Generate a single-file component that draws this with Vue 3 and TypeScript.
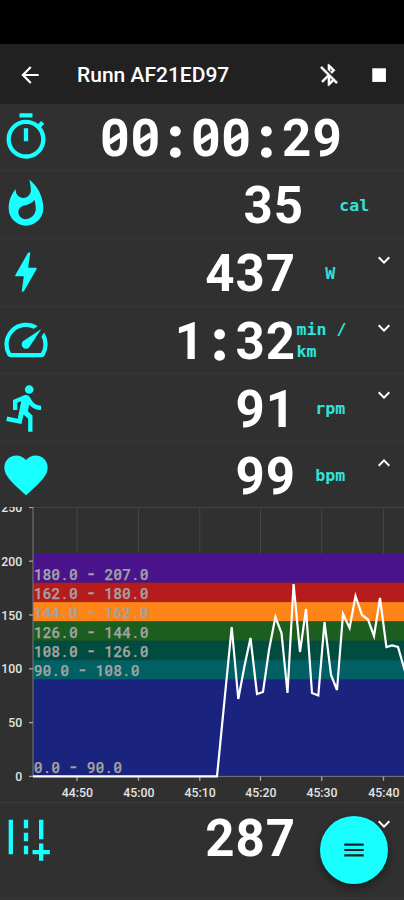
<script setup lang="ts">
interface Metric {
  name: string
  value: string
  unit?: string
  icon: string
  chevron?: 'up' | 'down'
  layout: 'timer' | 'plain' | 'expandable'
}

const icons = {
  timer:
    'M12,20A7,7 0 0,1 5,13A7,7 0 0,1 12,6A7,7 0 0,1 19,13A7,7 0 0,1 12,20M19.03,7.39L20.45,5.97C20,5.46 19.55,5 19.04,4.56L17.62,6C16.07,4.74 14.12,4 12,4A9,9 0 0,0 3,13A9,9 0 0,0 12,22C17,22 21,17.97 21,13C21,10.88 20.26,8.93 19.03,7.39M11,14H13V8H11M15,1H9V3H15V1Z',
  flame:
    'M13.5.67s.74 2.65.74 4.8c0 2.06-1.35 3.73-3.41 3.73-2.07 0-3.63-1.67-3.63-3.73l.03-.36C5.21 7.51 4 10.62 4 14c0 4.42 3.58 8 8 8s8-3.58 8-8C20 8.61 17.41 3.8 13.5.67zM11.71 19c-1.78 0-3.22-1.4-3.22-3.14 0-1.62 1.05-2.76 2.81-3.12 1.77-.36 3.6-1.21 4.62-2.58.39 1.29.59 2.65.59 4.04 0 2.65-2.15 4.8-4.8 4.8z',
  bolt: 'M11 21h-1l1-7H7.5c-.58 0-.57-.32-.38-.66.19-.34.05-.08.07-.12C8.48 10.94 10.42 7.54 13 3h1l-1 7h3.5c.49 0 .56.33.47.51l-.07.15C12.96 17.55 11 21 11 21z',
  speed:
    'M20.38 8.57l-1.23 1.85a8 8 0 0 1-.22 7.58H5.07A8 8 0 0 1 15.58 6.85l1.85-1.23A10 10 0 0 0 3.35 19a2 2 0 0 0 1.72 1h13.85a2 2 0 0 0 1.74-1 10 10 0 0 0-.27-10.44zm-9.79 6.84a2 2 0 0 0 2.83 0l5.66-8.49-8.49 5.66a2 2 0 0 0 0 2.83z',
  run: 'M13.49 5.48c1.1 0 2-.9 2-2s-.9-2-2-2-2 .9-2 2 .9 2 2 2zm-3.6 13.9l1-4.4 2.1 2v6h2v-7.5l-2.1-2 .6-3c1.3 1.5 3.3 2.5 5.5 2.5v-2c-1.9 0-3.5-1-4.3-2.4l-1-1.6c-.4-.6-1-1-1.7-1-.3 0-.5.1-.8.1l-5.2 2.2v4.7h2v-3.4l1.8-.7-1.6 8.1-4.9-1-.4 2 7 1.4z',
  heart:
    'M12 21.35l-1.45-1.32C5.4 15.36 2 12.28 2 8.5 2 5.42 4.42 3 7.5 3c1.74 0 3.41.81 4.5 2.09C13.09 3.81 14.76 3 16.5 3 19.58 3 22 5.42 22 8.5c0 3.78-3.4 6.86-8.55 11.54L12 21.35z',
  road: 'M20 18v-3h-2v3h-3v2h3v3h2v-3h3v-2zM20 4h-2v9h2zM6 4H4v16h2zM11 4h2v4h-2zM11 10h2v4h-2zM11 16h2v4h-2z',
}

const metrics: Metric[] = [
  { name: 'time', value: '00:00:29', icon: icons.timer, layout: 'timer' },
  { name: 'energy', value: '35', unit: 'cal', icon: icons.flame, layout: 'plain' },
  { name: 'power', value: '437', unit: 'W', icon: icons.bolt, chevron: 'down', layout: 'expandable' },
  { name: 'pace', value: '1:32', unit: 'min / km', icon: icons.speed, chevron: 'down', layout: 'expandable' },
  { name: 'cadence', value: '91', unit: 'rpm', icon: icons.run, chevron: 'down', layout: 'expandable' },
  { name: 'heart', value: '99', unit: 'bpm', icon: icons.heart, chevron: 'up', layout: 'expandable' },
]
const distance: Metric = {
  name: 'distance', value: '287', unit: '', icon: icons.road, chevron: 'down', layout: 'expandable',
}

const chevrons = {
  up: 'M12 8l-6 6 1.41 1.41L12 10.83l4.59 4.58L18 14z',
  down: 'M16.59 8.59L12 13.17 7.41 8.59 6 10l6 6 6-6z',
}

// Chart geometry, in the pixels of its own 404 x 295 canvas
const left = 33
const right = 404
const base = 269.4
const perUnit = 1.076
const y = (v: number): number => base - v * perUnit

const zones = [
  { from: 180, to: 207, color: '#4a148c' },
  { from: 162, to: 180, color: '#b71c1c' },
  { from: 144, to: 162, color: '#ff8418' },
  { from: 126, to: 144, color: '#1b5e20' },
  { from: 108, to: 126, color: '#004d40' },
  { from: 90, to: 108, color: '#006064' },
  { from: 0, to: 90, color: '#1a237e' },
]

const charWidth = 8.83
const zoneLabels = zones.map((z) => {
  const text = `${z.from.toFixed(1)} - ${z.to.toFixed(1)}`
  const chars = [...text].map((c, i) => ({ c, x: left + 5.1 + i * charWidth }))
  return { chars, y: y(z.from) - 3.2 }
})

const yTicks = [0, 50, 100, 150, 200, 250]
const xTicks = [
  { x: 77, label: '44:50' },
  { x: 138.5, label: '45:00' },
  { x: 199.8, label: '45:10' },
  { x: 260.5, label: '45:20' },
  { x: 321.7, label: '45:30' },
  { x: 383.5, label: '45:40' },
]

const samples: [number, number][] = [
  [33, 269.4], [217, 269.4], [231.7, 120], [238.3, 192], [244.5, 159], [250.5, 131], [257, 187],
  [263, 185], [269, 143], [275.4, 110], [281.5, 126], [287.5, 186], [293.6, 77], [300, 145],
  [306, 102], [312, 186], [318.3, 188.5], [324.5, 115], [331, 168], [337, 183], [343, 107],
  [349.6, 121], [355.5, 89], [362, 108], [368, 112.5], [374, 129], [380, 91], [386.4, 140],
  [392, 138.5], [398, 140], [406, 168],
]
const line = samples.map((p) => p.join(',')).join(' ')
</script>

<template>
  <div class="screen">
    <div class="status"></div>
    <header class="bar">
      <svg class="bar-icon" viewBox="0 0 24 24"><path d="M20 11H7.83l5.59-5.59L12 4l-8 8 8 8 1.41-1.41L7.83 13H20v-2z" /></svg>
      <h1>Runn AF21ED97</h1>
      <svg class="bar-icon bluetooth" viewBox="0 0 24 24"><path d="M13 5.83l1.88 1.88-1.6 1.6 1.41 1.41 3.02-3.02L12 2h-1v5.03l2 2v-3.2zM5.41 4L4 5.41 10.59 12 5 17.59 6.41 19 11 14.41V22h1l4.29-4.29 2.3 2.29L20 18.59 5.41 4zM13 18.17v-3.76l1.88 1.88L13 18.17z" /></svg>
      <svg class="bar-icon stop" viewBox="0 0 24 24"><path d="M5.8 5.8h12.6v12.6H5.8z" /></svg>
    </header>

    <section v-for="m in metrics" :key="m.name" class="row" :class="[m.layout, m.name]">
      <svg class="icon" viewBox="0 0 24 24"><path :d="m.icon" /></svg>
      <div class="value"><span v-for="(c, i) in m.value" :key="i" :class="{ zero: c === '0', colon: c === ':' }">{{ c }}</span></div>
      <div v-if="m.unit" class="unit">{{ m.unit }}</div>
      <svg v-if="m.chevron" class="chevron" viewBox="0 0 24 24"><path :d="chevrons[m.chevron]" /></svg>
    </section>

    <svg class="chart" viewBox="0 0 404 295">
      <g class="grid">
        <line v-for="t in xTicks" :key="t.x" :x1="t.x" y1="0.5" :x2="t.x" :y2="base" />
        <line :x1="left - 4" y1="0.5" :x2="right" y2="0.5" />
      </g>
      <rect v-for="z in zones" :key="z.from" :x="left" :y="y(z.to)" :width="right - left" :height="(z.to - z.from) * perUnit" :fill="z.color" />
      <g class="axis">
        <line :x1="left" y1="0" :x2="left" :y2="base" />
        <line :x1="left" :y1="base" :x2="right" :y2="base" />
      </g>
      <g class="ticks">
        <line v-for="t in yTicks" :key="t" :x1="left - 4" :y1="y(t)" :x2="left" :y2="y(t)" />
        <line v-for="t in xTicks" :key="t.x" :x1="t.x" :y1="base" :x2="t.x" :y2="base + 4.5" />
      </g>
      <g class="tick-text">
        <text v-for="t in yTicks" :key="t" x="22.3" :y="y(t) + 4.6" text-anchor="end">{{ t }}</text>
        <text v-for="t in xTicks" :key="t.x" :x="t.x + 0.3" y="289.8" text-anchor="middle">{{ t.label }}</text>
      </g>
      <g v-for="l in zoneLabels" :key="l.y" class="zone-text">
        <text :y="l.y"><tspan v-for="(g, i) in l.chars" :key="i" :x="g.x" :class="{ dash: g.c === '-' }">{{ g.c }}</tspan></text>
        <template v-for="(g, i) in l.chars" :key="i">
          <line v-if="g.c === '0'" :x1="g.x - 2" :y1="l.y - 3.8" :x2="g.x + 2" :y2="l.y - 6.6" />
        </template>
      </g>
      <polyline class="trace" :points="line" />
    </svg>

    <section class="row expandable distance">
      <svg class="icon" viewBox="0 0 24 24"><path :d="distance.icon" /></svg>
      <div class="value"><span v-for="(c, i) in distance.value" :key="i">{{ c }}</span></div>
      <div class="unit"></div>
      <svg class="chevron" viewBox="0 0 24 24"><path :d="chevrons.down" /></svg>
    </section>

    <button class="fab" aria-label="Menu">
      <svg viewBox="0 0 24 24"><path d="M3 18h18v-2H3v2zm0-5h18v-2H3v2zm0-7v2h18V6H3z" /></svg>
    </button>
  </div>
</template>

<style>
body {
  background: #303030;
}
</style>

<style scoped>
.screen {
  position: relative;
  display: flex;
  flex-direction: column;
  width: 404px;
  height: 900px;
  overflow: hidden;
  background: #303030;
  color: #fff;
  font-family: Roboto, sans-serif;
}
.status {
  flex: none;
  height: 44px;
  background: #000;
}
.bar {
  display: flex;
  flex: none;
  align-items: center;
  box-sizing: border-box;
  height: 60px;
  padding: 1px 12px 0 17px;
  background: #212121;
}
.bar h1 {
  flex: 1;
  margin: 0 0 0 34px;
  font-size: 21px;
  font-weight: 500;
  line-height: 26px;
}
.bar-icon {
  width: 26px;
  height: 26px;
  fill: #fff;
}
.bluetooth {
  stroke: #fff;
  stroke-width: 0.4;
}
.stop {
  margin-left: 24px;
}
.row {
  display: grid;
  flex: none;
  align-items: center;
  box-sizing: border-box;
  height: 67.75px;
  border-bottom: 1px solid #373737;
}
.timer {
  grid-template-columns: 52px 338px;
  height: 67px;
}
.plain {
  grid-template-columns: 52px 251.5px 100.5px;
}
.expandable {
  grid-template-columns: 52px 243.5px 68.5px 40px;
}
.heart {
  height: 65px;
  border-bottom: 0;
}
.distance {
  height: 97px;
  padding-bottom: 27px;
  border-top: 1px solid #3b3b3b;
}
.icon {
  width: 52px;
  height: 52px;
  fill: #18ffff;
}
.value {
  display: flex;
  justify-content: flex-end;
  padding-top: 4px;
  font-size: 51px;
  font-weight: 700;
  line-height: 56px;
}
.timer .value {
  justify-content: center;
}
.value span {
  position: relative;
  width: 30.3px;
  text-align: center;
}
.colon {
  -webkit-text-stroke: 2.6px #fff;
}
.zero::after {
  content: '';
  position: absolute;
  top: 25px;
  left: 8px;
  width: 14px;
  height: 5px;
  background: #fff;
  transform: rotate(-33deg);
}
.unit {
  padding: 3px 0 0 1px;
  color: #2fe3dd;
  font-family: 'DejaVu Sans Mono', monospace;
  font-size: 16.6px;
  font-weight: 700;
  line-height: 22px;
  text-align: center;
}
.pace .unit {
  text-align: left;
}
.chevron {
  align-self: start;
  justify-self: center;
  width: 24px;
  height: 24px;
  margin-top: 9px;
  fill: #fff;
}
.chart {
  display: block;
  flex: none;
  width: 404px;
  height: 295px;
}
.grid line {
  stroke: #444;
}
.axis line {
  stroke: #7a7a7a;
}
.ticks line {
  stroke: #a5a5a5;
  stroke-width: 1.3;
}
.tick-text {
  fill: #e4e4e4;
  font-size: 12.3px;
  font-weight: 500;
}
.zone-text text {
  fill: #a3a3a3;
  stroke: #a3a3a3;
  stroke-width: 0.25px;
  font-size: 14.7px;
  font-weight: 500;
  text-anchor: middle;
}
.zone-text .dash {
  font-family: 'DejaVu Sans', sans-serif;
  font-size: 20px;
}
.zone-text line {
  stroke: #a3a3a3;
  stroke-width: 1.4;
}
.trace {
  fill: none;
  stroke: #fff;
  stroke-width: 2.2;
}
.fab {
  position: absolute;
  top: 816px;
  left: 320px;
  display: flex;
  align-items: center;
  justify-content: center;
  width: 68px;
  height: 68px;
  padding: 0;
  border: 0;
  border-radius: 50%;
  background: #18ffff;
  box-shadow: 0 4px 8px rgba(0, 0, 0, 0.4);
}
.fab svg {
  width: 26px;
  height: 26px;
  fill: #212121;
}
</style>
